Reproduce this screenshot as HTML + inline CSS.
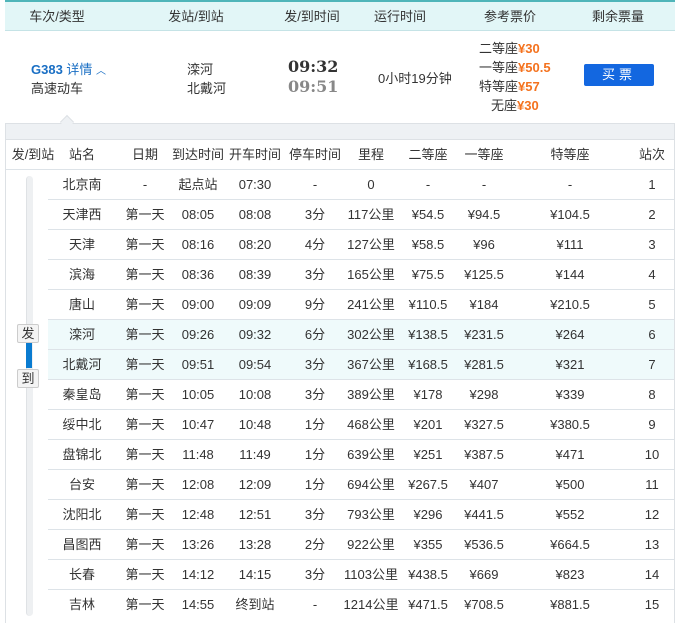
<!DOCTYPE html><html><head><meta charset="utf-8"><style>
*{margin:0;padding:0;box-sizing:border-box}
body{width:681px;height:616px;overflow:hidden;background:#fff;font-family:"Liberation Sans","Noto Sans CJK SC",sans-serif;font-size:13px;color:#333;position:relative;line-height:16px}
.a{position:absolute;white-space:nowrap}
.c{position:absolute;transform:translateX(-50%);white-space:nowrap;height:30px;line-height:30px}
.hd{position:absolute;left:5px;top:0;width:670px;height:31px;background:#e2f6f7;border-top:2px solid #4fb5b9;border-bottom:1px solid #c5e3e6}
.o{color:#f4721e;font-weight:bold}
.panel{position:absolute;left:5px;top:123px;width:670px;height:500px;border:1px solid #dde1e5;border-bottom:none}
.row{position:absolute;left:48px;width:626px;height:30px;border-bottom:1px solid #dde3e8}
</style></head><body>
<div class="hd"></div>
<div class="c" style="left:57px;top:2px">车次/类型</div>
<div class="c" style="left:196px;top:2px">发站/到站</div>
<div class="c" style="left:312px;top:2px">发/到时间</div>
<div class="c" style="left:400px;top:2px">运行时间</div>
<div class="c" style="left:510px;top:2px">参考票价</div>
<div class="c" style="left:618px;top:2px">剩余票量</div>

<div class="a" style="left:31px;top:62px;color:#1a6fc4"><b>G383</b> 详情 <span style="font-size:10px">︿</span></div>
<div class="a" style="left:31px;top:81px">高速动车</div>
<div class="a" style="left:187px;top:62px">滦河</div>
<div class="a" style="left:187px;top:81px">北戴河</div>
<div class="a" style="left:288px;top:59px;font-size:16px;font-weight:bold;color:#333;font-family:'DejaVu Serif',serif">09:32</div>
<div class="a" style="left:288px;top:79px;font-size:16px;font-weight:bold;color:#888;font-family:'DejaVu Serif',serif">09:51</div>
<div class="a" style="left:378px;top:71px">0小时19分钟</div>
<div class="a" style="left:479px;top:41px">二等座<span class="o">¥30</span></div>
<div class="a" style="left:479px;top:60px">一等座<span class="o">¥50.5</span></div>
<div class="a" style="left:479px;top:79px">特等座<span class="o">¥57</span></div>
<div class="a" style="left:491px;top:98px">无座<span class="o">¥30</span></div>
<div class="a" style="left:584px;top:64px;width:70px;height:22px;background:#1367e0;border-radius:2px;color:#fff;text-align:center;line-height:22px;letter-spacing:4px">买票</div>

<div class="panel">
<div style="height:16px;background:#eef1f4;border-bottom:1px solid #dde1e5"></div>
<div style="position:absolute;left:0;top:45px;width:668px;border-top:1px solid #dde3e8"></div>
</div>
<div class="a" style="left:62px;top:117px;width:10px;height:10px;background:#eef1f4;border-left:1px solid #dde1e5;border-top:1px solid #dde1e5;transform:rotate(45deg)"></div>
<div class="a" style="left:26px;top:176px;width:7px;height:440px;background:#eef0f2;border-radius:4px;border-left:1px solid #dfe2e5"></div>
<div class="a" style="left:26px;top:340px;width:6px;height:28px;background:#0a7bd0"></div>
<div class="a" style="left:17px;top:324px;width:22px;height:19px;background:#f4f4f4;border:1px solid #ccc;border-radius:2px;text-align:center;line-height:17px">发</div>
<div class="a" style="left:17px;top:369px;width:22px;height:19px;background:#f4f4f4;border:1px solid #ccc;border-radius:2px;text-align:center;line-height:17px">到</div>

<div id="t"></div>
<script>
var hx=[33,82,145,198,255,315,371,428,484,570,652];
var h=["发/到站","站名","日期","到达时间","开车时间","停车时间","里程","二等座","一等座","特等座","站次"];
var s="";
h.forEach(function(t,i){s+='<div class="c" style="left:'+hx[i]+'px;top:140px">'+t+'</div>'});
var d=[["北京南","-","起点站","07:30","-","0","-","-","-"],
["天津西","第一天","08:05","08:08","3分","117公里","¥54.5","¥94.5","¥104.5"],
["天津","第一天","08:16","08:20","4分","127公里","¥58.5","¥96","¥111"],
["滨海","第一天","08:36","08:39","3分","165公里","¥75.5","¥125.5","¥144"],
["唐山","第一天","09:00","09:09","9分","241公里","¥110.5","¥184","¥210.5"],
["滦河","第一天","09:26","09:32","6分","302公里","¥138.5","¥231.5","¥264"],
["北戴河","第一天","09:51","09:54","3分","367公里","¥168.5","¥281.5","¥321"],
["秦皇岛","第一天","10:05","10:08","3分","389公里","¥178","¥298","¥339"],
["绥中北","第一天","10:47","10:48","1分","468公里","¥201","¥327.5","¥380.5"],
["盘锦北","第一天","11:48","11:49","1分","639公里","¥251","¥387.5","¥471"],
["台安","第一天","12:08","12:09","1分","694公里","¥267.5","¥407","¥500"],
["沈阳北","第一天","12:48","12:51","3分","793公里","¥296","¥441.5","¥552"],
["昌图西","第一天","13:26","13:28","2分","922公里","¥355","¥536.5","¥664.5"],
["长春","第一天","14:12","14:15","3分","1103公里","¥438.5","¥669","¥823"],
["吉林","第一天","14:55","终到站","-","1214公里","¥471.5","¥708.5","¥881.5"]];
d.forEach(function(r,k){var y=170+k*30;
s+='<div class="row" style="top:'+y+'px;'+((k==5||k==6)?'background:#effafb;':'')+(k==14?'border:none;':'')+'"></div>';
r.concat([k+1]).forEach(function(t,i){s+='<div class="c" style="left:'+hx[i+1]+'px;top:'+y+'px">'+t+'</div>'});});
document.getElementById("t").innerHTML=s;
</script>
</body></html>
